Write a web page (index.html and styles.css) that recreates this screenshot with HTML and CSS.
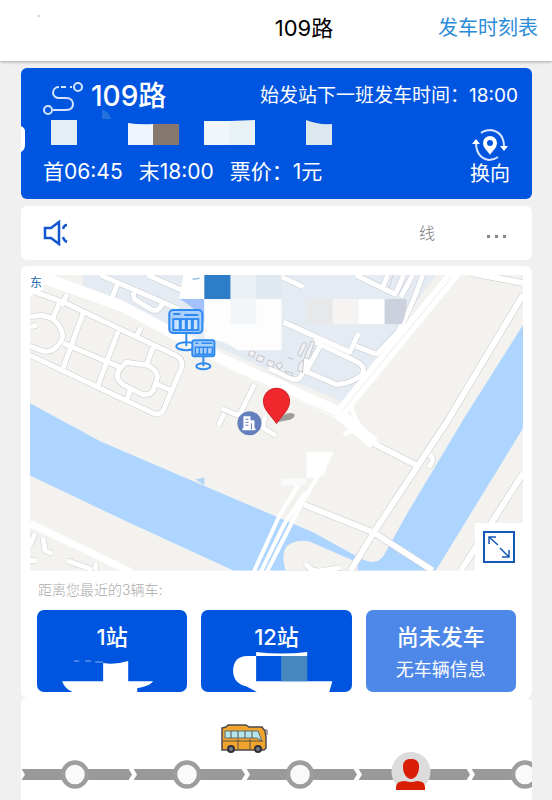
FILE: index.html
```html
<!DOCTYPE html>
<html lang="zh-CN">
<head>
    <meta charset="UTF-8">
    <meta name="viewport" content="width=device-width, initial-scale=1.0">
    <title>109路</title>
    <link rel="stylesheet" href="styles.css">
</head>
<body>
    <header class="top-bar">
        <div class="top-left">
            <svg width="12" height="16" viewBox="0 0 12 16"><path d="M7 2h3" stroke="#bbb"/><path d="M1 14l2-1" stroke="#eee"/></svg>
        </div>
        <h1 class="top-title">109路</h1>
        <a class="top-link" href="#">发车时刻表</a>
    </header>

    <main class="content">
        <section class="route-card">
            <div class="route-head">
                <svg class="route-icon" viewBox="0 0 40 34" fill="none" stroke="#d5e5ff" stroke-width="2">
                    <circle cx="35" cy="5" r="4"/>
                    <circle cx="5" cy="28" r="4"/>
                    <path d="M29 5h-2M23 5h-5M16 5c-4 0-6 3-6 6s3 5 6 5h7c5 0 7 3 7 6 0 4-3 6-7 6H10"/>
                </svg>
                <h2 class="route-name">109路</h2>
                <p class="next-bus">始发站下一班发车时间：18:00</p>
            </div>
            <div class="route-body">
                <div class="route-info">
                    <svg class="route-ends" viewBox="0 0 300 25" width="300" height="25">
                        <path d="M-22 6q4 2 4 5v14q0 5-4 7z" fill="#fff"/>
                        <path d="M59-11q9 5 9 10h-9z" fill="#2471dc"/>
                        <path d="M8 0h26v25H8z" fill="#e3eff4"/>
                        <path d="M85 3q12 2 25 1v21H85z" fill="#eff5fc"/>
                        <path d="M110 4h26v21h-26z" fill="#87786e"/>
                        <path d="M161 1h26v24h-26z" fill="#f0f7fa"/>
                        <path d="M187 1l25-1v25h-25z" fill="#e8f1f5"/>
                        <path d="M263 0q12 5 26 4v21h-26z" fill="#dde8ee"/>
                    </svg>
                    <div class="route-times">
                        <span>首06:45</span>
                        <span>末18:00</span>
                        <span>票价：1元</span>
                    </div>
                </div>
                <button class="swap-button" type="button">
                    <svg width="36" height="32" viewBox="0 0 36 32">
                        <g fill="none" stroke="#d5e5ff" stroke-width="2">
                            <path d="M9 4Q13 1 19 1q13 2 13 17"/>
                            <path d="M26 28q-4 3-9 3Q4 29 4 13"/>
                        </g>
                        <path d="M28 17h8l-4 5zM0 15l4-5 4 5z" fill="#fff"/>
                        <path fill="#fff" fill-rule="evenodd" d="M18 7a7 7 0 0 0-7 7c0 5 5 8 7 12 2-4 7-7 7-12a7 7 0 0 0-7-7zm0 4a3 3 0 1 1 0 6 3 3 0 0 1 0-6z"/>
                    </svg>
                    <span>换向</span>
                </button>
            </div>
        </section>

        <section class="notice">
            <svg width="26" height="26" viewBox="0 0 26 26" fill="none" stroke="#1257cf" stroke-width="2.500">
                <path d="M2 8h6l8-6v22l-8-6H2z"/>
                <path d="M20 9q1-4 4-4M20 17q1 4 4 5"/>
            </svg>
            <span class="notice-text">线</span>
            <span class="notice-more"><i></i><i></i><i></i></span>
        </section>

        <section class="panel">
            <div class="map">
                <svg class="map-view" viewBox="30 275 492 295">
                    <defs>
                        <g id="streets">
                            <path d="M30 290L63 302L175 355Q184 360 181 368L164 408Q160 416 153 413L30 355"/>
                            <path d="M67 294L61 306M83 313L63 368M118 331L98 385M153 347L146 365M63 343L120 367"/>
                            <path d="M126 362L147 365Q158 370 157 378L153 390Q149 396 142 394L122 384Q115 378 118 371Z"/>
                            <path d="M130 389L127 400M157 384L170 390"/>
                            <path d="M30 317Q45 313 54 320Q66 332 61 341Q54 353 43 351L30 346M53 318L60 301M30 327L37 325"/>
                            <path d="M117 285L110 302M100 275L178 309M133 292L134 299L152 310Q160 312 162 302M147 275L190 294M141 327L136 337"/>
                            <path d="M277 275L303 287M355 275L396 295M387 275L382 287M403 275L395 293M412 275L400 297M422 275Q410 310 397 332L376 354L355 346M283 322L349 352L358 333"/>
                            <path d="M313 341L355 361Q367 367 361 375Q347 385 335 384L305 371M321 343L305 372M312 342L303 369Q300 382 292 379L268 368"/>
                            <path d="M254 384L239 415M221 408L235 414L245 416M224 413L218 425M265 416L262 427L275 435"/>
                            <path d="M425 453Q434 456 431 462L428 467"/>
                            <path d="M35 533L30 545M43 537L45 550L52 553M30 560L36 560M67 560L92 569M96 562L95 570M305 563Q310 572 322 570T340 567"/>
                        </g>
                        <g id="roads">
                            <path d="M522 295L447 420L373 532L350 570"/>
                            <path d="M303 504L373 532L432 570"/>
                            <path d="M522 473L460 570"/>
                            <path d="M373 443L416 465"/>
                            <path d="M470 273L522 283"/>
                        </g>
                    </defs>
                    <rect x="30" y="275" width="492" height="295" fill="#f3f2ef"/>
                    <path d="M83 275H435L343 402L300 384L168 325L83 287Z" fill="#e4ebf3"/>
                    <path d="M30 403L100 441L203 485L313 532L360 558Q376 566 383 555L407 512L465 415L522 325V428L435 570H233L120 518L30 475Z" fill="#aed5ff"/>
                    <path d="M285 570Q280 552 287 545Q296 538 309 541L357 562V570Z" fill="#f3f2ef"/>
                    <path d="M385 275L381 290M392 275L388 291" stroke="#cfd3da"/>

                    <use href="#streets" class="street-edge"/>
                    <use href="#streets" class="street"/>
                    <use href="#roads" class="road-edge"/>
                    <use href="#roads" class="road"/>

                    <g fill="none" stroke="#fff" stroke-linejoin="round">
                        <path d="M30 273L120 306L220 359L337 412L373 443" stroke-width="12"/>
                        <path d="M455 272L403 335L340 412" stroke-width="12"/>
                        <path d="M30 523L130 571" stroke-width="7"/>
                        <path d="M340 416L378 444M350 402Q352 420 366 434M343 434Q352 428 362 436" stroke-width="4"/>
                        <path d="M331 452L300 505L266 572M302 478L279 515L253 572M305 492L284 523L260 572" stroke-width="4"/>
                    </g>
                    <path d="M30 280L120 312L220 365L335 416M451 277L400 339L342 410" fill="none" stroke="#efefed"/>

                    <g fill="#f1f2f4" stroke="#c4c7ce">
                        <path d="M250 350l5 2-2 5-5-2zM258 355l6 2-2 5-6-2zM268 360l6 2-2 5-6-2z"/>
                        <path d="M297 354l5-11q5-2 3 4l-5 9zM311 341l3 1-6 17-4-2zM299 363l4-3-1 12-5-2z"/>
                        <path d="M275 365l5-3 2 4-3 3zM285 371l7 2v3l-7-3zM287 357l6 2"/>
                    </g>

                    <path d="M30 275h14v14l-14 7z" fill="#fff"/>
                    <path d="M183 275h21v24h-25z" fill="#fff"/>
                    <path d="M192 279h4l3-1" stroke="#6aa6d8" fill="none"/>
                    <path d="M179 299h25v25q-5-14-25-25z" fill="#a3c2fb"/>
                    <path d="M230 275h26v24h-26z" fill="#eaf0f4"/>
                    <path d="M256 275h25v24h-25z" fill="#e0e8f0"/>
                    <path d="M204 299h77v51h-44q-10-9-33-12z" fill="#fdfdfe"/>
                    <path d="M230 299h26v25h-26z" fill="#f3f6f9"/>
                    <path d="M204 273h26v26h-26z" fill="#2e7dc9"/>
                    <path d="M306 299h26v25h-26z" fill="#e6e8ea"/>
                    <path d="M332 299h26v25h-26z" fill="#f5f4f2"/>
                    <path d="M358 299h26v25h-26z" fill="#fff"/>
                    <path d="M384 299h22q0 16-5 25h-17z" fill="#ccd1dd"/>
                    <path d="M306 452h26l-9 23-17 3z" fill="#fff"/>
                    <path d="M281 478h25v7h-25z" fill="#fafafa"/>
                    <path d="M195 479l9-2v8z" fill="#b3d6f5"/>
                    <text x="30" y="287" class="map-label">东</text>

                    <!-- bus stops -->
                    <g fill="none" stroke="#2f8bf0" stroke-width="2">
                        <ellipse cx="186" cy="346" rx="10" ry="4"/>
                        <path d="M186 333v13"/>
                        <rect x="169" y="310" width="33" height="23" rx="4" fill="#a9cffb"/>
                        <rect x="173" y="319" width="25" height="11" fill="#cbe3ff"/>
                        <path d="M180 319v11M186 319v11M192 319v11" stroke-width="3"/>
                        <path d="M173 314h7M184 315h14"/>
                    </g>
                    <g fill="none" stroke="#2f8bf0" stroke-width="2">
                        <ellipse cx="203" cy="366" rx="7" ry="3"/>
                        <path d="M203 356v10"/>
                        <rect x="192" y="340" width="22" height="16" rx="2" fill="#a9cffb"/>
                        <path d="M195 347h17v7h-17zM199 347v7M203 347v7M207 347v7M195 343h3M201 343h11" stroke-width="1.500"/>
                    </g>
                    <!-- building -->
                    <circle cx="249" cy="423" r="12" fill="#647fbd"/>
                    <path d="M243 428V416h7v4h4v8h1v2h-13v-2z" fill="#fff"/>
                    <path d="M245 419h3M245 422h3M245 425h3M251 423v6" stroke="#647fbd"/>
                    <!-- pin -->
                    <path d="M276 422l7-7q6-4 11-1 1 4-7 6z" fill="#777" opacity=".7"/>
                    <path d="M276 388a13 13 0 0 0-13 13c0 9 7 13 13 22 6-9 13-13 13-22a13 13 0 0 0-13-13z" fill="#f0282d" stroke="#cf2025"/>
                </svg>
                <button class="expand-button" type="button" aria-label="全屏">
                    <svg width="32" height="32" viewBox="0 0 32 32" fill="none" stroke="#1458b8" stroke-width="2">
                        <path d="M1 1h30v30H1z"/>
                        <path d="M6 13V6h7M6 6l9 8M17 17l9 9M26 19v7h-7" stroke-width="1.500"/>
                    </svg>
                </button>
            </div>
            <p class="nearby">距离您最近的3辆车:</p>
            <div class="arrivals">
                <div class="arrival">
                    <strong>1站</strong>
                    <svg class="arrival-mask" viewBox="0 0 150 82">
                        <path d="M66 54q12 2 25-2v20h25q-4 5-16 7v4H36q-8-3-11-11h41z" fill="#fff"/>
                        <path d="M37 52h5M48 52h6M58 53h8" stroke="#8bb1ef"/>
                    </svg>
                </div>
                <div class="arrival">
                    <strong>12站</strong>
                    <svg class="arrival-mask" viewBox="0 0 150 82">
                        <path d="M55 47h-9q-13 0-14 14 0 13 13 16l11 6h72l3-11H55z" fill="#fff"/>
                        <path d="M55 43q25 3 51 0v4H55z" fill="#fff"/>
                        <path d="M80 47h26v25H80z" fill="#4587be"/>
                    </svg>
                </div>
                <div class="arrival waiting">
                    <strong>尚未发车</strong>
                    <span>无车辆信息</span>
                </div>
            </div>
        </section>

        <section class="line">
            <div class="bus-row">
                <svg width="50" height="30" viewBox="0 0 50 30">
                    <path d="M2 4l4-1 2-2h18l3 2h13l3 4 1 6v11l-2 2H2z" fill="#eea42d" stroke="#4d4a4e" stroke-width="1.500"/>
                    <path d="M5 7h33l4 10-5-3H5z" fill="#b5e6ee" stroke="#5c6d73"/>
                    <path d="M11 7v7M18 7v7M25 7v7M32 7v7M18 15v10M30 15v10" stroke="#5d5144"/>
                    <path d="M3 17h40M44 6h3v5" fill="none" stroke="#5d5144"/>
                    <g fill="#777b8c" stroke="#30303b" stroke-width="2">
                        <circle cx="11" cy="25" r="3"/>
                        <circle cx="38" cy="25" r="3"/>
                    </g>
                </svg>
            </div>
            <svg class="hidden-defs" width="0" height="0">
                <defs>
                    <g id="segment">
                        <path d="M0 15h113v11H0z" fill="#999"/>
                        <path d="M-5 14h5l4 6.500-4 6.500h-5l4-6.500z" fill="#fff"/>
                    </g>
                    <g id="station">
                        <use href="#segment"/>
                        <circle cx="54" cy="20.500" r="12" fill="#fafafa" stroke="#9d9d9d" stroke-width="4.500"/>
                    </g>
                </defs>
            </svg>
            <ul class="stations">
                <li><svg viewBox="0 0 112.400 46"><use href="#station"/></svg></li>
                <li><svg viewBox="0 0 112.400 46"><use href="#station"/></svg></li>
                <li><svg viewBox="0 0 112.400 46"><use href="#station"/></svg></li>
                <li>
                    <svg viewBox="0 0 112.400 46">
                        <use href="#segment"/>
                        <path d="M38 30a19.500 19.500 0 1 1 30 0z" fill="#dcdcdc"/>
                        <path d="M53 5c6 0 8 3 8 8 0 7-4 12-8 12s-8-5-8-12c0-5 2-8 8-8z" fill="#d91e06"/>
                        <path d="M38 36v-3q0-6 9-6 6 2 12 0 8 0 8 6v3z" fill="#d91e06"/>
                    </svg>
                </li>
                <li><svg viewBox="0 0 112.400 46"><use href="#station"/></svg></li>
            </ul>
        </section>
    </main>
</body>
</html>
```

FILE: styles.css
```css
* {
    box-sizing: border-box;
}

body {
    margin: 0;
    background: #f0f0f0;
    color: #000;
    font-family: Inter, "Noto Sans CJK SC", sans-serif;
}

h1, h2, p, ul {
    margin: 0;
    padding: 0;
    font-weight: normal;
}

svg {
    display: block;
}

button {
    margin: 0;
    padding: 0;
    border: none;
    font-family: inherit;
    cursor: pointer;
}

.top-bar {
    display: flex;
    align-items: center;
    height: 61px;
    padding: 0 14px 6px;
    background: #fff;
    box-shadow: 0 1px 3px rgba(0, 0, 0, 0.3);
}

.top-left {
    flex: 0 0 156px;
    padding: 0 0 12px 16px;
}

.top-title {
    flex: 1;
    text-align: center;
    font-size: 22px;
    line-height: 32px;
}

.top-link {
    color: #2a8bd8;
    font-size: 20px;
    line-height: 32px;
    text-decoration: none;
}

.content {
    padding: 7px 20px 0 21px;
}

.route-card {
    padding: 8px 14px 12px 22px;
    border-radius: 6px;
    background: #0055e0;
    color: #fff;
}

.route-head {
    display: flex;
    align-items: center;
    height: 40px;
}

.route-icon {
    width: 40px;
    height: 34px;
    margin-top: 6px;
}

.route-name {
    margin-left: 8px;
    font-size: 28px;
    font-weight: 500;
    line-height: 40px;
}

.next-bus {
    margin-left: auto;
    font-size: 19px;
    line-height: 28px;
}

.route-body {
    display: flex;
    justify-content: space-between;
    padding-top: 4px;
}

.route-ends {
    overflow: visible;
}

.route-times {
    display: flex;
    gap: 16px;
    margin-top: 12px;
    font-size: 21px;
    line-height: 30px;
}

.swap-button {
    display: flex;
    flex-direction: column;
    align-items: center;
    align-self: flex-end;
    margin-right: 8px;
    background: none;
    color: #fff;
    font-size: 20px;
    line-height: 26px;
}

.notice {
    display: flex;
    align-items: center;
    height: 54px;
    margin-top: 7px;
    padding: 0 26px 0 22px;
    border-radius: 6px;
    background: #fff;
}

.notice-text {
    margin-left: auto;
    color: #777;
    font-size: 16px;
    font-weight: 300;
    line-height: 26px;
}

.notice-more {
    display: flex;
    gap: 5px;
    margin: 6px 0 0 52px;
}

.notice-more i {
    width: 3px;
    height: 3px;
    background: #888;
}

.panel {
    margin-top: 6px;
    padding: 9px 9px 6px;
    border-radius: 6px;
    background: #fff;
}

.map {
    position: relative;
}

.map-view {
    width: 100%;
    height: auto;
}

.map-label {
    fill: #2a70b0;
    font-size: 12px;
}

.street-edge, .street, .road-edge, .road {
    fill: none;
    stroke-linejoin: round;
}

.street-edge {
    stroke: #c9cad0;
    stroke-width: 6px;
}

.street {
    stroke: #fff;
    stroke-width: 5px;
}

.road-edge {
    stroke: #c9c9cd;
    stroke-width: 7px;
}

.road {
    stroke: #fff;
    stroke-width: 6px;
}

.expand-button {
    position: absolute;
    right: 0;
    bottom: 0;
    padding: 8px;
    background: #fff;
}

.nearby {
    padding: 9px 8px 10px;
    color: #aaa;
    font-size: 14px;
    font-weight: 300;
    line-height: 20px;
}

.arrivals {
    display: flex;
    gap: 14px;
    padding: 0 7px;
}

.arrival {
    position: relative;
    display: flex;
    flex: 1;
    flex-direction: column;
    align-items: center;
    height: 82px;
    padding-top: 10px;
    overflow: hidden;
    border-radius: 7px;
    background: #0055e0;
    color: #fff;
    font-size: 18px;
    line-height: 32px;
}

.arrival strong {
    font-size: 22px;
    font-weight: 500;
    line-height: 34px;
}

.arrival.waiting {
    background: #4d88e9;
}

.arrival-mask {
    position: absolute;
    left: 0;
    bottom: 0;
    width: 100%;
}

.line {
    padding-top: 26px;
    overflow: hidden;
    border-radius: 6px 6px 0 0;
    background: #fff;
}

.bus-row {
    padding-left: 39%;
}

.hidden-defs {
    position: absolute;
}

.stations {
    display: flex;
    list-style: none;
}

.stations li {
    flex: 0 0 22%;
}

.stations svg {
    width: 100%;
    overflow: visible;
}
```
